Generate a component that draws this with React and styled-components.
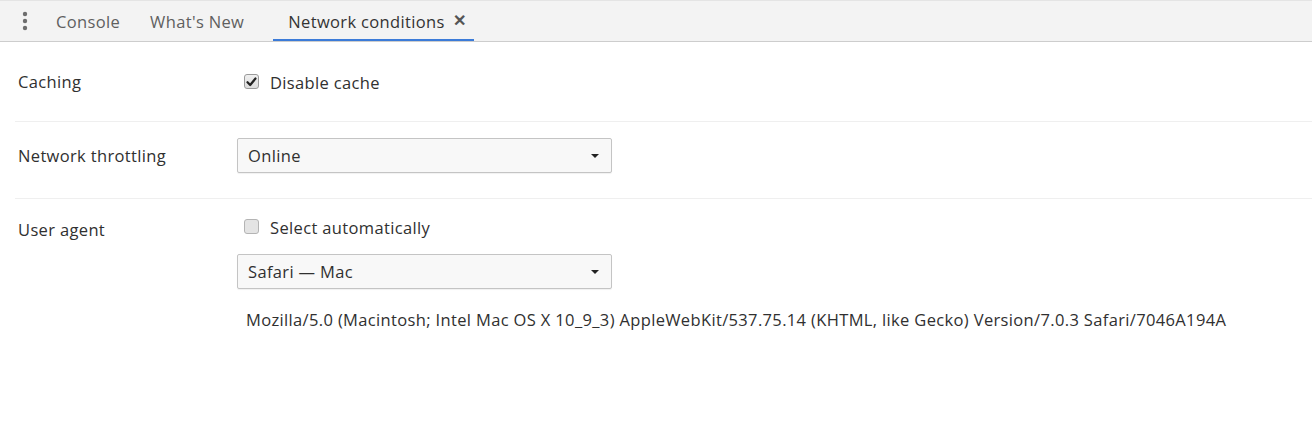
import React from "react";
import styled, { createGlobalStyle } from "styled-components";

const Global = createGlobalStyle`
  html, body { margin: 0; padding: 0; background: #fff; }
  body { font-family: "Open Sans", "Noto Sans", sans-serif; color: #303030; }
  * { box-sizing: border-box; }
`;

const Page = styled.div`
  width: 1312px;
  height: 436px;
  background: #fff;
  overflow: hidden;
`;

const TabBar = styled.div`
  display: flex;
  align-items: stretch;
  height: 42px;
  background: #f3f3f3;
  border-top: 1px solid #e4e4e4;
  border-bottom: 1px solid #cdcdcd;
`;

const MenuButton = styled.div`
  width: 41px;
  display: flex;
  align-items: center;
  justify-content: center;
  padding-left: 8px;
`;

const Tab = styled.div`
  display: flex;
  align-items: center;
  gap: 8px;
  padding: 3px ${(p) => p.$padRight}px 0 15px;
  font-size: 16.5px;
  letter-spacing: 0.35px;
  color: ${(p) => (p.$active ? "#333" : "#5f5f5f")};
  border-bottom: 2px solid ${(p) => (p.$active ? "#3b7bd8" : "transparent")};
  white-space: nowrap;
`;

const Close = styled.span`
  font-size: 16px;
  font-weight: 700;
  color: #555;
  line-height: 1;
  margin-top: -4px;
`;

const Section = styled.section`
  display: grid;
  grid-template-columns: 219px 1fr;
  margin-left: 15px;
  padding: ${(p) => p.$pad};
  padding-left: 3px;
  border-bottom: ${(p) => (p.$last ? "none" : "1px solid #efefef")};
`;

const Label = styled.div`
  font-size: 16.5px;
  letter-spacing: 0.35px;
  line-height: ${(p) => p.$lh || 24}px;
  padding-top: ${(p) => p.$top || 0}px;
  color: #303030;
`;

const Controls = styled.div`
  display: flex;
  flex-direction: column;
  align-items: flex-start;
`;

const CheckRow = styled.label`
  display: flex;
  align-items: center;
  height: 24px;
  font-size: 16.5px;
  letter-spacing: 0.35px;
  color: #303030;
  padding-left: 7px;
`;

const Box = styled.span`
  width: 15px;
  height: 15px;
  border-radius: 3px;
  border: 1px solid ${(p) => (p.$checked ? "#9a9a9a" : "#b4b4b4")};
  background: ${(p) => (p.$checked ? "linear-gradient(#f0f0f0, #dcdcdc)" : "#e4e4e4")};
  display: flex;
  align-items: center;
  justify-content: center;
  margin-right: 11px;
  margin-top: -1px;
`;

const Select = styled.div`
  width: 375px;
  height: 35px;
  margin-top: ${(p) => p.$mt || 0}px;
  border: 1px solid #c4c4c4;
  border-radius: 2px;
  background: #f8f8f8;
  box-shadow: 0 1px 1px rgba(0, 0, 0, 0.06);
  display: flex;
  align-items: center;
  justify-content: space-between;
  padding: 0 10px 0 10px;
  font-size: 16.5px;
  letter-spacing: 0.35px;
  color: #303030;
`;

const Arrow = styled.span`
  width: 0;
  height: 0;
  border-left: 4px solid transparent;
  border-right: 4px solid transparent;
  border-top: 4px solid #222;
  margin-right: 2px;
`;

const UAString = styled.div`
  margin-top: 20px;
  padding-left: 9px;
  font-size: 16.5px;
  letter-spacing: 0.35px;
  line-height: 22px;
  color: #303030;
  white-space: nowrap;
`;

const Dots = () => (
  <svg width="6" height="20" viewBox="0 0 6 20">
    <circle cx="3" cy="3" r="2.2" fill="#6d6d6d" />
    <circle cx="3" cy="10" r="2.2" fill="#6d6d6d" />
    <circle cx="3" cy="17" r="2.2" fill="#6d6d6d" />
  </svg>
);

const Check = () => (
  <svg width="11" height="10" viewBox="0 0 11 10">
    <path d="M1.5 5.2 L4.2 8 L9.5 1.5" stroke="#222" strokeWidth="2.2" fill="none" strokeLinecap="round" strokeLinejoin="round" />
  </svg>
);

export default function App() {
  return (
    <Page>
      <Global />
      <TabBar>
        <MenuButton>
          <Dots />
        </MenuButton>
        <Tab $padRight={15}>Console</Tab>
        <Tab $padRight={29}>What's New</Tab>
        <Tab $active $padRight={8}>
          Network conditions
          <Close>✕</Close>
        </Tab>
      </TabBar>

      <Section $pad="28px 0 27px">
        <Label>Caching</Label>
        <Controls>
          <CheckRow>
            <Box $checked>
              <Check />
            </Box>
            Disable cache
          </CheckRow>
        </Controls>
      </Section>

      <Section $pad="16px 0 25px">
        <Label $lh={35}>Network throttling</Label>
        <Controls>
          <Select>
            <span>Online</span>
            <Arrow />
          </Select>
        </Controls>
      </Section>

      <Section $pad="16px 0 0" $last>
        <Label $top={3}>User agent</Label>
        <Controls>
          <CheckRow>
            <Box />
            Select automatically
          </CheckRow>
          <Select $mt={15}>
            <span>Safari — Mac</span>
            <Arrow />
          </Select>
          <UAString>
            Mozilla/5.0 (Macintosh; Intel Mac OS X 10_9_3) AppleWebKit/537.75.14 (KHTML, like Gecko) Version/7.0.3 Safari/7046A194A
          </UAString>
        </Controls>
      </Section>
    </Page>
  );
}
